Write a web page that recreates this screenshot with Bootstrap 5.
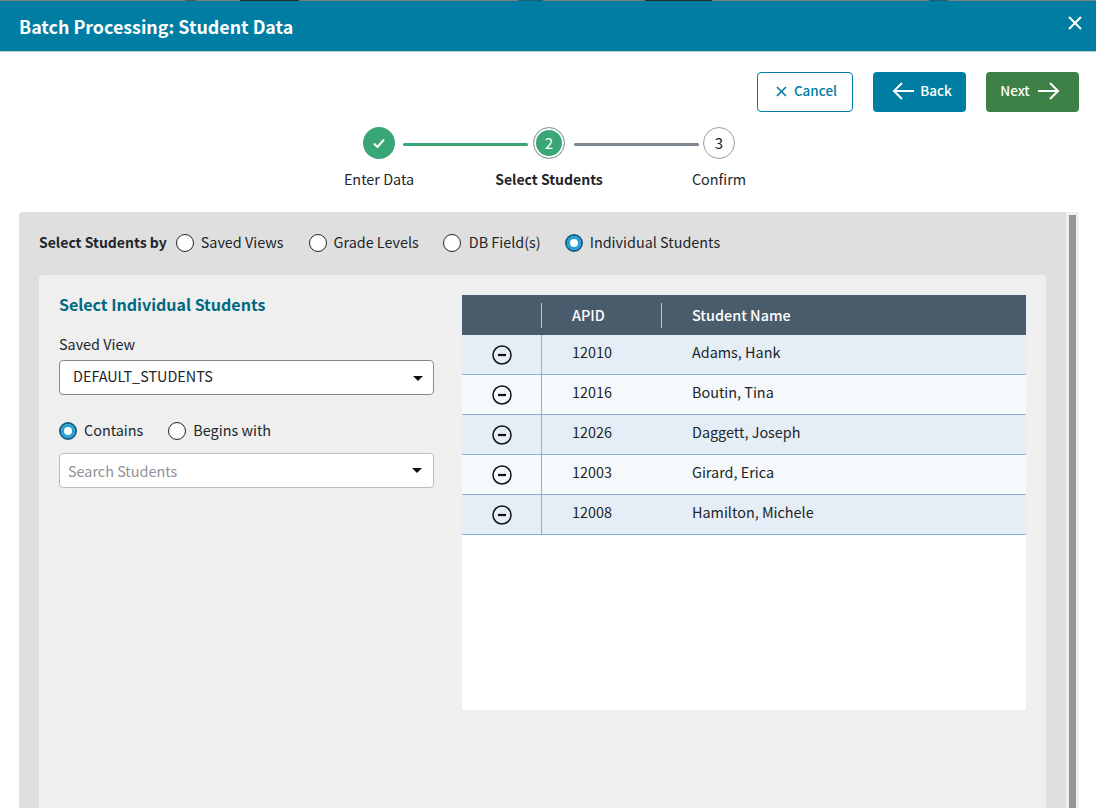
<!DOCTYPE html>
<html lang="en">
<head>
<meta charset="utf-8">
<title>Batch Processing</title>
<link href="https://cdn.jsdelivr.net/npm/bootstrap@5.3.0/dist/css/bootstrap.min.css" rel="stylesheet">
<style>
html,body{height:100%;overflow:hidden}
body{font-family:"Noto Sans CJK SC","Noto Sans",sans-serif;font-size:14.4px;line-height:20px;color:#212529;background:#fff}
.top-strip{height:1px;background:linear-gradient(90deg,#7a7f82 185px,#55595c 185px,#55595c 196px,#7a7f82 196px,#7a7f82 240px,#2b2b2b 240px,#2b2b2b 299px,#7a7f82 299px,#7a7f82 518px,#1f5f78 518px,#1f5f78 543px,#7a7f82 543px,#7a7f82 645px,#2b2b2b 645px,#2b2b2b 712px,#7a7f82 712px,#7a7f82 929px,#1f5f78 929px,#1f5f78 948px,#7a7f82 948px)}
.dlg-head{height:51px;background:#007da3;border-bottom:1px solid #b9cdd4;color:#fff;padding:0 13px 0 19px}
.dlg-title{font-size:17.85px;font-weight:600;line-height:50px;margin:0}
.dlg-x{background:none;border:0;padding:0;display:flex;color:#fff;margin-top:-6px}
.act-row{padding:20px 17px 0 0;gap:20px}
.act{height:40px;font-size:13.5px;font-weight:500;line-height:20px;display:flex;align-items:center;justify-content:center;border-radius:4px;padding:0 0 4px;color:#fff;gap:6px}
.act svg{margin-top:2px}
.act:hover{color:#fff}
.act-cancel{width:96px;background:#fff;border:1px solid #007da3;color:#007da3;gap:7px;padding-left:3px}
.act-cancel:hover{color:#007da3}
.act-back{width:93px;background:#007da3;border:0;padding-left:5px}
.act-next{width:93px;background:#3d8146;border:0;padding-right:5px;gap:8px}
.stepper{margin-top:16px;height:65px}
.step-group{margin-left:2px;margin-top:-1px}
.step{width:110px;flex:none}
.step-dot{width:32px;height:32px;flex:none;border-radius:50%;display:flex;align-items:center;justify-content:center;font-size:15px;background:#fff;border:1px solid #9a9ea3;color:#212529}
.step-done{background:#39a678;border:0;color:#fff}
.step-cur{background:#39a678;color:#fff;box-shadow:inset 0 0 0 2px #fff;border-color:#9a9ea3}
.step-lbl{margin-top:10px;line-height:20px;white-space:nowrap}
.step-lbl-cur{font-size:14px;font-weight:600}
.step-line{width:125px;height:3px;flex:none;border-radius:2px;margin:16px -34px 0 -31px;position:relative;z-index:1}
.line-done{background:#39a678}
.line-todo{background:#7e868f;margin-left:-30px;margin-right:-35px}
.pane{margin:19px 17px 0 19px;height:596px;background:#dfdfdf;border-radius:4px 0 0 0;padding:20px 20px 0;position:relative;overflow:hidden}
.pane-thumb{position:absolute;top:0;right:0;bottom:0;width:13px;background:#efefef;padding:3px 3px 0}
.pane-thumb::after{content:"";display:block;width:7px;height:100%;background:#959595}
.by-row{height:22px;margin-bottom:21px}
.by-lbl{font-size:14px;font-weight:600;margin-right:9px;padding-bottom:2px;color:#212529}
.rad{display:flex;align-items:flex-start;gap:7px;margin:-2px 0 0}
.rad-dot{width:18px;height:18px;margin-top:2px;border-radius:50%;border:1.5px solid #212529;background:#fff;flex:none}
.rad-on{background:#fff;border:2px solid #0f5f83;box-shadow:inset 0 0 0 3px #25a3d9}
.gap-r{margin-right:25px}
.gap-s{margin-right:24px}
.gap-db{margin-right:24px;gap:8px}
.inner{background:#efefef;border-radius:4px 4px 0 0;padding:20px;height:553px;width:1007px}
.left-col{width:375px;flex:none}
.sec-title{font-size:16px;font-weight:600;color:#00697f;line-height:20px;margin:-1px 0 20px}
.fld-lbl{line-height:20px;margin:0 0 6px;display:block}
.sel-box{height:35px;background:#fff;border:1px solid #8a8a8a;border-radius:4px;padding:0 13px 4px;position:relative;display:flex;align-items:center}
.sel-box::after{content:"";position:absolute;right:10px;top:15px;border-left:5px solid transparent;border-right:5px solid transparent;border-top:5px solid #111}
.sel-search{border-color:#bcbcbc;padding:0 8px;color:#8f9296;margin-top:-1px}
.sel-search::after{right:11px;top:14px}
.rad-row{margin:25px 0 12px;height:22px}
.tbl-wrap{width:564px;height:415px;background:#fff;margin-left:28px;flex:none}
.tbl{width:100%;border-collapse:separate;border-spacing:0;table-layout:fixed}
.tbl th{background:#4a5b6b;color:#fff;font-weight:500;height:40px;padding:0 0 0 30px;position:relative}
.tbl th+th::before{content:"";position:absolute;left:-1px;top:8px;bottom:7px;width:1px;background:#b9c2ca}
.tbl td{height:40px;padding:0 0 6px 30px;border-bottom:1px solid #8eb0d8}
.tbl td.minus{padding:0;border-right:1px solid #8eb0d8}
.tbl td.minus svg{display:block;margin:0 0 0 30px}
.tr-a td{background:#e5edf6}
.tr-b td{background:#f5f9fc}
</style>
</head>
<body>
<div class="top-strip"></div>
<div class="dlg-head d-flex justify-content-between align-items-center">
  <h1 class="dlg-title">Batch Processing: Student Data</h1>
  <button class="dlg-x" type="button" aria-label="Close">
    <svg width="16" height="16" viewBox="0 0 16 16" fill="none" stroke="currentColor" stroke-width="2"><path d="M2 2 14 14M14 2 2 14"/></svg>
  </button>
</div>
<div class="act-row d-flex justify-content-end">
  <button class="btn act act-cancel" type="button">
    <svg width="11" height="11" viewBox="0 0 11 11" fill="none" stroke="currentColor" stroke-width="1.600"><path d="M1 1 10 10M10 1 1 10"/></svg>Cancel</button>
  <button class="btn act act-back" type="button">
    <svg width="22" height="18" viewBox="0 0 22 18" fill="none" stroke="currentColor" stroke-width="2"><path d="M22 9H2M10 1 2 9l8 8"/></svg>Back</button>
  <button class="btn act act-next" type="button">Next
    <svg width="22" height="18" viewBox="0 0 22 18" fill="none" stroke="currentColor" stroke-width="2"><path d="M0 9h20M12 1l8 8-8 8"/></svg></button>
</div>
<div class="stepper d-flex justify-content-center">
  <div class="d-flex step-group">
    <div class="step d-flex flex-column align-items-center">
      <div class="step-dot step-done"><svg width="14" height="12" viewBox="0 0 14 12" fill="none" stroke="currentColor" stroke-width="2"><path d="M2 6.500 5.500 10 12 2.500"/></svg></div>
      <div class="step-lbl">Enter Data</div>
    </div>
    <div class="step-line line-done"></div>
    <div class="step d-flex flex-column align-items-center">
      <div class="step-dot step-cur">2</div>
      <div class="step-lbl step-lbl-cur">Select Students</div>
    </div>
    <div class="step-line line-todo"></div>
    <div class="step d-flex flex-column align-items-center">
      <div class="step-dot">3</div>
      <div class="step-lbl">Confirm</div>
    </div>
  </div>
</div>
<div class="pane">
  <div class="pane-thumb"></div>
  <div class="by-row d-flex align-items-center">
    <span class="by-lbl">Select Students by</span>
    <label class="rad gap-r"><span class="rad-dot"></span>Saved Views</label>
    <label class="rad gap-s"><span class="rad-dot"></span>Grade Levels</label>
    <label class="rad gap-db"><span class="rad-dot"></span>DB Field(s)</label>
    <label class="rad"><span class="rad-dot rad-on"></span>Individual Students</label>
  </div>
  <div class="inner d-flex align-items-start">
    <div class="left-col">
      <h2 class="sec-title">Select Individual Students</h2>
      <span class="fld-lbl">Saved View</span>
      <div class="sel-box">DEFAULT_STUDENTS</div>
      <div class="rad-row d-flex align-items-center">
        <label class="rad gap-r"><span class="rad-dot rad-on"></span>Contains</label>
        <label class="rad"><span class="rad-dot"></span>Begins with</label>
      </div>
      <div class="sel-box sel-search">Search Students</div>
    </div>
    <div class="tbl-wrap">
      <table class="tbl">
        <colgroup><col style="width:80px"><col style="width:120px"><col></colgroup>
        <thead><tr><th></th><th>APID</th><th>Student Name</th></tr></thead>
        <tbody>
          <tr class="tr-a"><td class="minus"><svg width="20" height="20" viewBox="0 0 20 20" fill="none" stroke="#111" stroke-width="1.500"><circle cx="10" cy="10" r="9"/><path d="M6 10h8" stroke-width="2.200"/></svg></td><td>12010</td><td>Adams, Hank</td></tr>
          <tr class="tr-b"><td class="minus"><svg width="20" height="20" viewBox="0 0 20 20" fill="none" stroke="#111" stroke-width="1.500"><circle cx="10" cy="10" r="9"/><path d="M6 10h8" stroke-width="2.200"/></svg></td><td>12016</td><td>Boutin, Tina</td></tr>
          <tr class="tr-a"><td class="minus"><svg width="20" height="20" viewBox="0 0 20 20" fill="none" stroke="#111" stroke-width="1.500"><circle cx="10" cy="10" r="9"/><path d="M6 10h8" stroke-width="2.200"/></svg></td><td>12026</td><td>Daggett, Joseph</td></tr>
          <tr class="tr-b"><td class="minus"><svg width="20" height="20" viewBox="0 0 20 20" fill="none" stroke="#111" stroke-width="1.500"><circle cx="10" cy="10" r="9"/><path d="M6 10h8" stroke-width="2.200"/></svg></td><td>12003</td><td>Girard, Erica</td></tr>
          <tr class="tr-a"><td class="minus"><svg width="20" height="20" viewBox="0 0 20 20" fill="none" stroke="#111" stroke-width="1.500"><circle cx="10" cy="10" r="9"/><path d="M6 10h8" stroke-width="2.200"/></svg></td><td>12008</td><td>Hamilton, Michele</td></tr>
        </tbody>
      </table>
    </div>
  </div>
</div>
<script src="https://cdn.jsdelivr.net/npm/bootstrap@5.3.0/dist/js/bootstrap.bundle.min.js"></script>
</body>
</html>
